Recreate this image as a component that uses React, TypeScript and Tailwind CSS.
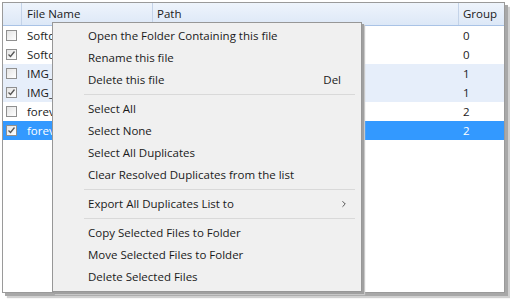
import { ChevronRight } from 'lucide-react';

type Row = { name: string; group: string; checked: boolean; tone: 'plain' | 'tint' | 'sel' };

const rows: Row[] = [
    { name: 'Softdeluxe', group: '0', checked: false, tone: 'plain' },
    { name: 'Softdeluxe', group: '0', checked: true, tone: 'plain' },
    { name: 'IMG_0021', group: '1', checked: false, tone: 'tint' },
    { name: 'IMG_0021', group: '1', checked: true, tone: 'tint' },
    { name: 'forever', group: '2', checked: false, tone: 'plain' },
    { name: 'forever', group: '2', checked: true, tone: 'sel' },
];

function Check({ checked }: { checked: boolean }) {
    return (
        <div className="w-[11px] h-[11px] border border-[#8f8f8f] bg-gradient-to-br from-[#e4e4e4] to-white flex items-center justify-center">
            {checked && (
                <svg width="9" height="9" viewBox="0 0 9 9">
                    <path d="M1.5 4.5 L3.5 6.5 L7.5 1.5" stroke="#555" strokeWidth="1.3" fill="none" />
                </svg>
            )}
        </div>
    );
}

function Sep() {
    return <div className="h-px bg-[#d9d9d9] ml-[31px] mr-[6px] my-[3px]" />;
}

function Item({ label, right }: { label: string; right?: React.ReactNode }) {
    return (
        <div className="h-[22px] flex items-center pl-[35px] pr-[10px]">
            <span className="flex-1">{label}</span>
            {right}
        </div>
    );
}

export default function App() {
    return (
        <div
            className="w-[510px] h-[300px] bg-white relative overflow-hidden text-[11.5px] text-[#1a1a1a]"
            style={{ fontFamily: '"Open Sans", "Noto Sans", sans-serif' }}
        >
            <div className="absolute left-[2px] top-[2px] w-[503px] h-[291px] border border-[#9a9a9a] bg-white shadow-[3px_3px_0_#a8a8a8,5px_5px_1px_#d0d0d0] flex flex-col">
                {/* header */}
                <div className="h-[23px] flex bg-gradient-to-b from-[#eef4fc] to-[#dde8f7] border-b border-[#a9c3e6]">
                    <div className="w-[19px] border-r border-[#c4d3e8]" />
                    <div className="w-[131px] pl-[5px] flex items-center border-r border-[#c4d3e8]">File Name</div>
                    <div className="w-[306px] pl-[4px] flex items-center border-r border-[#c4d3e8]">Path</div>
                    <div className="flex-1 pl-[4px] flex items-center">Group</div>
                </div>
                {rows.map((r, i) => (
                    <div
                        key={i}
                        className={
                            'h-[19px] flex items-center ' +
                            (r.tone === 'tint' ? 'bg-[#e6eefa] ' : '') +
                            (r.tone === 'sel' ? 'bg-[#3399ff] text-white ' : '')
                        }
                    >
                        <div className="w-[19px] pl-[3px] flex items-center">
                            <Check checked={r.checked} />
                        </div>
                        <div className="w-[131px] pl-[5px] overflow-hidden whitespace-nowrap">{r.name}</div>
                        <div className="w-[306px]" />
                        <div className="flex-1 pl-[4px]">{r.group}</div>
                    </div>
                ))}
            </div>

            {/* context menu */}
            <div className="absolute left-[52px] top-[22px] w-[310px] h-[270px] bg-[#f0f0f0] border border-[#979797] shadow-[2px_2px_0_#a0a0a0,3px_3px_1px_#c8c8c8] pt-[2px] text-[#1a1a1a]">
                <Item label="Open the Folder Containing this file" />
                <Item label="Rename this file" />
                <Item label="Delete this file" right={<span className="mr-[10px]">Del</span>} />
                <Sep />
                <Item label="Select All" />
                <Item label="Select None" />
                <Item label="Select All Duplicates" />
                <Item label="Clear Resolved Duplicates from the list" />
                <Sep />
                <Item label="Export All Duplicates List to" right={<ChevronRight size={10} strokeWidth={2} className="mr-[2px] text-[#333]" />} />
                <Sep />
                <Item label="Copy Selected Files to Folder" />
                <Item label="Move Selected Files to Folder" />
                <Item label="Delete Selected Files" />
            </div>
        </div>
    );
}
